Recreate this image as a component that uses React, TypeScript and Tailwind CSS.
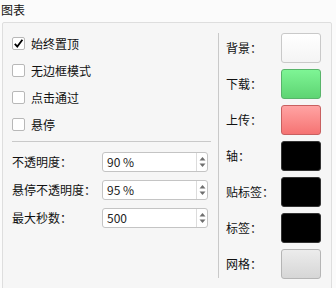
const font = { fontFamily: '"Noto Sans CJK SC", "Liberation Sans", sans-serif' };

function Check({ checked, label }: { checked?: boolean; label: string }) {
  return (
    <div className="flex h-[27px] items-center">
      <div className="flex h-[13px] w-[13px] items-center justify-center rounded-[2px] border border-[#b8b8b8] bg-white">
        {checked && (
          <svg width="11" height="11" viewBox="0 0 11 11" fill="none" stroke="#000" strokeWidth="1.8">
            <path d="M1.8 5.8L4.3 8.6L9.4 1.8" />
          </svg>
        )}
      </div>
      <span className="ml-[6px] text-[12px] leading-none text-[#111]">{label}</span>
    </div>
  );
}

function Spin({ label, value }: { label: string; value: string }) {
  return (
    <div className="flex h-[20px] items-center">
      <span className="w-[90px] text-[12px] leading-none text-[#111]">{label}</span>
      <div className="flex h-[20px] w-[106px] items-stretch rounded-[3px] border border-[#c4c4c4] bg-white">
        <span className="flex flex-1 items-center pl-[4px] text-[12px] text-[#222]">{value}</span>
        <div className="flex w-[11px] flex-col items-center justify-center border-l border-[#dcdcdc] text-[#777]">
          <svg width="7" height="12" viewBox="0 0 7 12" fill="#6f6f6f">
            <path d="M3.5 1L6.5 4.5H0.5Z" />
            <path d="M0.5 7.5H6.5L3.5 11Z" />
          </svg>
        </div>
      </div>
    </div>
  );
}

function ColorRow({ label, cls }: { label: string; cls: string }) {
  return (
    <div className="flex h-[30px] items-center">
      <span className="w-[55px] text-[12px] leading-none text-[#111]">{label}</span>
      <div className={`h-[30px] w-[40px] rounded-[3px] border ${cls}`} />
    </div>
  );
}

export default function App() {
  return (
    <div className="h-[288px] w-[336px] overflow-hidden bg-[#fbfbfb]" style={font}>
      <div className="h-[22px] pt-[3px] pl-[1px] text-[12px] leading-[14px] text-[#111]">图表</div>
      <div className="ml-[2px] flex h-[280px] w-[330px] rounded-[2px] border border-[#dedede] bg-[#f6f6f6]">
        <div className="ml-[9px] flex w-[199px] flex-col pt-[7px]">
          <Check checked label="始终置顶" />
          <Check label="无边框模式" />
          <Check label="点击通过" />
          <Check label="悬停" />
          <div className="mt-[3px] h-px w-full bg-[#c9c9c9]" />
          <div className="mt-[10px] flex flex-col gap-[8px]">
            <Spin label="不透明度：" value="90 %" />
            <Spin label="悬停不透明度：" value="95 %" />
            <Spin label="最大秒数：" value="500" />
          </div>
        </div>
        <div className="mt-[10px] ml-[7px] h-[245px] w-px bg-[#c9c9c9]" />
        <div className="ml-[7px] flex flex-col gap-[6px] pt-[10px]">
          <ColorRow label="背景：" cls="border-[#c9c9c9] bg-gradient-to-b from-white to-[#f4f4f4]" />
          <ColorRow label="下载：" cls="border-[#58b46a] bg-gradient-to-b from-[#7ef595] to-[#5ed473]" />
          <ColorRow label="上传：" cls="border-[#c86060] bg-gradient-to-b from-[#ffa3a3] to-[#f57373]" />
          <ColorRow label="轴：" cls="border-[#333] bg-black" />
          <ColorRow label="贴标签：" cls="border-[#333] bg-black" />
          <ColorRow label="标签：" cls="border-[#333] bg-black" />
          <ColorRow label="网格：" cls="border-[#b5b5b5] bg-gradient-to-b from-[#ececec] to-[#d6d6d6]" />
        </div>
      </div>
    </div>
  );
}
